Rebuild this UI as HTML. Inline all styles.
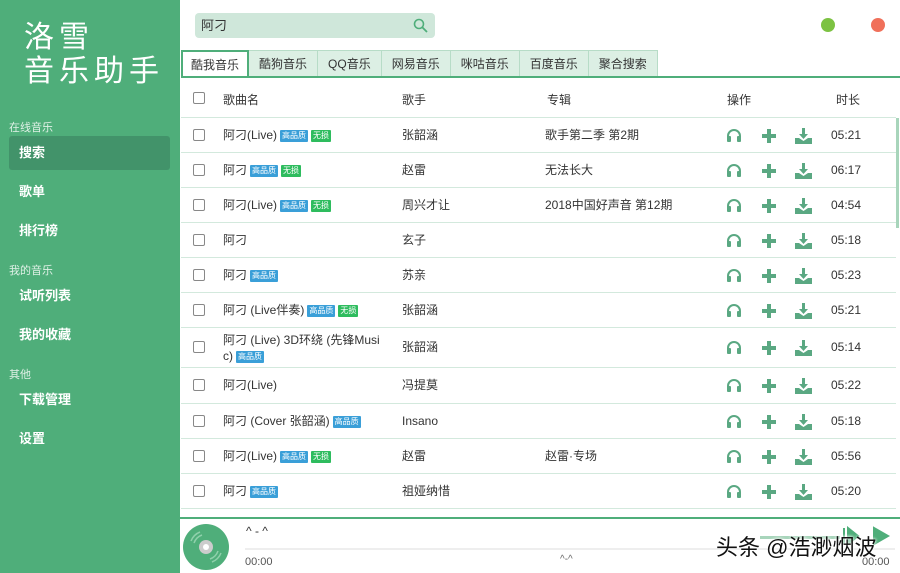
<!DOCTYPE html>
<html><head><meta charset="utf-8"><style>
*{margin:0;padding:0;box-sizing:border-box}
body{width:900px;height:573px;overflow:hidden;background:#fff;font-family:"Liberation Sans","Noto Sans CJK SC",sans-serif;font-size:12px;color:#333;position:relative}
.side{position:absolute;left:0;top:0;width:180px;height:573px;background:#4fae7a;color:#fff}
.logo{position:absolute;left:24px;top:21px;font-size:30px;line-height:34px;letter-spacing:5px}
.grp{position:absolute;left:9px;font-size:11px;color:#dff0e6}
.item{position:absolute;left:9px;width:161px;height:34px;line-height:34px;padding-left:10px;font-size:13px;font-weight:bold;border-radius:3px}
.item.act{background:#42936a}
.search{position:absolute;left:195px;top:13px;width:240px;height:25px;background:#cfe7da;border-radius:4px;padding-left:6px;line-height:25px;font-size:13px}
.dot{position:absolute;top:18px;width:14px;height:14px;border-radius:50%}
.tabs{position:absolute;left:181px;top:50px;height:27px;display:flex}
.tab{height:27px;line-height:27px;padding:0 10px;background:#dcefe4;border:1px solid #b7dcc7;border-left:none;font-size:12px}
.tab.act{background:#fff;border:2px solid #4fae7a;border-bottom:none;padding:0 8px}
.tline{position:absolute;left:181px;top:76px;width:719px;height:2px;background:#4fae7a}
.row{position:absolute;left:181px;width:715px;border-bottom:1px solid #d3e9dd}
.row span{position:absolute;line-height:16px}
.cb{position:absolute;left:12px;width:12px;height:12px;border:1px solid #888;border-radius:2px;background:#fff}
.b{display:inline-block;font-size:8px;font-style:normal;color:#fff;padding:0 2px;line-height:12px;border-radius:1px;vertical-align:1px;margin-left:3px}
.hq{background:#3a9fd8}.ls{background:#2ebc5e}
.ic{position:absolute}
</style></head><body>
<div class="side">
<div class="logo">洛雪<br>音乐助手</div>
<div class="grp" style="top:119px">在线音乐</div>
<div class="item act" style="top:136px">搜索</div>
<div class="item" style="top:175px">歌单</div>
<div class="item" style="top:214px">排行榜</div>
<div class="grp" style="top:262px">我的音乐</div>
<div class="item" style="top:279px">试听列表</div>
<div class="item" style="top:318px">我的收藏</div>
<div class="grp" style="top:366px">其他</div>
<div class="item" style="top:383px">下载管理</div>
<div class="item" style="top:422px">设置</div>
</div>
<div class="search">阿刁
<svg style="position:absolute;right:7px;top:5px" width="15" height="15" viewBox="0 0 15 15"><circle cx="6" cy="6" r="4.5" fill="none" stroke="#4fae7a" stroke-width="1.6"/><path d="M9.5 9.5L14 14" stroke="#4fae7a" stroke-width="1.8"/></svg></div>
<div class="dot" style="left:821px;background:#7cc242"></div>
<div class="dot" style="left:871px;background:#f0705a"></div>
<div class="tabs"><div class="tab act">酷我音乐</div><div class="tab">酷狗音乐</div><div class="tab">QQ音乐</div><div class="tab">网易音乐</div><div class="tab">咪咕音乐</div><div class="tab">百度音乐</div><div class="tab">聚合搜索</div></div>
<div class="tline"></div>
<div id="tbl"></div>
<div style="position:absolute;left:896px;top:118px;width:3px;height:110px;background:#a8d5bb"></div>
<div style="position:absolute;left:180px;top:517px;width:720px;height:2px;background:#4fae7a"></div>
<svg style="position:absolute;left:182px;top:523px" width="48" height="48" viewBox="0 0 48 48"><circle cx="24" cy="24" r="23" fill="#4fae7a"/><circle cx="24" cy="24" r="7" fill="#ccc"/><circle cx="24" cy="24" r="3" fill="#fff"/><path d="M12 20a13 13 0 0 1 8-8M9 18a16 16 0 0 1 9-9M36 28a13 13 0 0 1-8 8M39 30a16 16 0 0 1-9 9" stroke="#8fd0ab" stroke-width="1.5" fill="none"/></svg>
<div style="position:absolute;left:246px;top:524px;font-size:12px">^ - ^</div>
<div style="position:absolute;left:245px;top:548px;width:650px;height:2px;background:#eee"></div>
<div style="position:absolute;left:245px;top:556px;font-size:11px;color:#555">00:00</div>
<div style="position:absolute;left:560px;top:554px;font-size:10px;color:#666">^-^</div>
<div style="position:absolute;left:862px;top:556px;font-size:11px;color:#555">00:00</div>
<div style="position:absolute;left:760px;top:536px;width:80px;height:3px;background:#a8d5bb"></div>
<svg style="position:absolute;left:842px;top:526px" width="50" height="20"><path d="M2 2v16M6 2l10 8-10 8z M32 2l14 8-14 8z" fill="#4fae7a" stroke="#4fae7a" stroke-width="2"/></svg>
<div style="position:absolute;left:716px;top:530px;font-size:22px;color:#111;text-shadow:0 0 3px #fff,0 0 3px #fff">头条 @浩渺烟波</div>
<script>
var rows=[["阿刁(Live)",1,1,"张韶涵","歌手第二季 第2期","05:21"],["阿刁",1,1,"赵雷","无法长大","06:17"],["阿刁(Live)",1,1,"周兴才让","2018中国好声音 第12期","04:54"],["阿刁",0,0,"玄子","","05:18"],["阿刁",1,0,"苏亲","","05:23"],["阿刁 (Live伴奏)",1,1,"张韶涵","","05:21"],["阿刁 (Live) 3D环绕 (先锋Musi<br>c)",1,0,"张韶涵","","05:14"],["阿刁(Live)",0,0,"冯提莫","","05:22"],["阿刁 (Cover 张韶涵)",1,0,"Insano","","05:18"],["阿刁(Live)",1,1,"赵雷","赵雷·专场","05:56"],["阿刁",1,0,"祖娅纳惜","","05:20"]];
var tops=[118,153,188,223,258,293,328,368,404,439,474,509];
var h='<div class="row" style="top:80px;height:38px"><div class="cb" style="top:12px"></div><span style="left:42px;top:12px">歌曲名</span><span style="left:221px;top:12px">歌手</span><span style="left:366px;top:12px">专辑</span><span style="left:546px;top:12px">操作</span><span style="left:655px;top:12px">时长</span></div>';
var G='#5aa882';
var icons='<svg class="ic" style="left:545px" width="16" height="14" viewBox="0 0 16 14"><path d="M2 12V8a6 6 0 0 1 12 0v4" fill="none" stroke="'+G+'" stroke-width="2"/><rect x="1" y="8" width="4" height="6" rx="1" fill="'+G+'"/><rect x="11" y="8" width="4" height="6" rx="1" fill="'+G+'"/></svg>'+
'<svg class="ic" style="left:580px" width="16" height="16" viewBox="0 0 16 16"><path d="M8 1v14M1 8h14" stroke="'+G+'" stroke-width="4"/></svg>'+
'<svg class="ic" style="left:614px" width="17" height="16" viewBox="0 0 17 16"><path d="M7 0h3v6h3l-4.5 5L4 6h3z" fill="'+G+'"/><path d="M0 10h4l4.5 3 4.5-3h4v6H0z" fill="'+G+'"/></svg>';
rows.forEach(function(r,i){var t=tops[i],ht=tops[i+1]-t,c=Math.round(ht/2);var two=i==6;
var nm=r[0]+(r[1]?'<i class="b hq">高品质</i>':'')+(r[2]?'<i class="b ls">无损</i>':'');
h+='<div class="row" style="top:'+t+'px;height:'+ht+'px"><div class="cb" style="top:'+(c-7)+'px"></div><span style="left:42px;top:'+(two?4:c-9)+'px">'+nm+'</span><span style="left:221px;top:'+(c-9)+'px">'+r[3]+'</span><span style="left:364px;top:'+(c-9)+'px">'+r[4]+'</span>'+icons.replace(/class="ic" style="/g,'class="ic" style="top:'+(c-8)+'px;')+'<span style="left:650px;top:'+(c-9)+'px">'+r[5]+'</span></div>';});
document.getElementById('tbl').innerHTML=h;
</script>
</body></html>
